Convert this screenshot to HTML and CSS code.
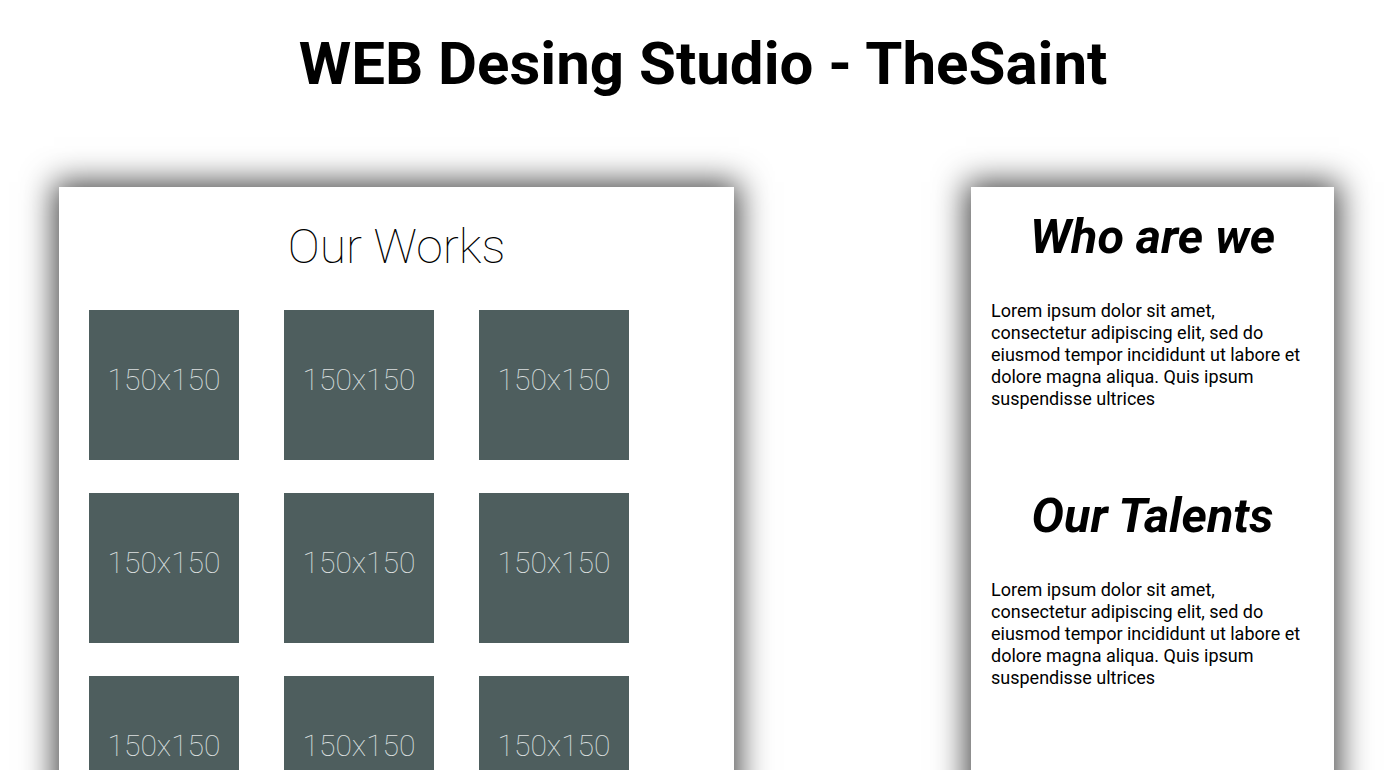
FILE: index.html
```html
<!DOCTYPE html>
<html>
<head>
<meta charset="utf-8">
<link rel="stylesheet" href="styles.css">
</head>
<body>
<h1 class="site-title">WEB Desing Studio - TheSaint</h1>
<main class="layout">
  <section class="card works">
    <h2 class="works-title">Our Works</h2>
    <div class="grid">
      <div class="tile">150x150</div>
      <div class="tile">150x150</div>
      <div class="tile">150x150</div>
      <div class="tile">150x150</div>
      <div class="tile">150x150</div>
      <div class="tile">150x150</div>
      <div class="tile">150x150</div>
      <div class="tile">150x150</div>
      <div class="tile">150x150</div>
    </div>
  </section>
  <aside class="card about">
    <h2 class="about-title">Who are we</h2>
    <p class="about-text">Lorem ipsum dolor sit amet, consectetur adipiscing elit, sed do eiusmod tempor incididunt ut labore et dolore magna aliqua. Quis ipsum suspendisse ultrices</p>
    <h2 class="about-title">Our Talents</h2>
    <p class="about-text">Lorem ipsum dolor sit amet, consectetur adipiscing elit, sed do eiusmod tempor incididunt ut labore et dolore magna aliqua. Quis ipsum suspendisse ultrices</p>
  </aside>
</main>
</body>
</html>
```

FILE: styles.css
```css
html, body {
  margin: 0;
  padding: 0;
  background: #ffffff;
  font-family: Roboto, "Liberation Sans", sans-serif;
  color: #000;
  overflow: hidden;
}

.site-title {
  margin: 0;
  padding-top: 24px;
  padding-left: 6px;
  height: 163px;
  box-sizing: border-box;
  text-align: center;
  font-size: 60px;
  font-weight: 700;
  line-height: 80px;
}

.layout {
  display: flex;
  justify-content: space-between;
  align-items: flex-start;
  padding: 24px 66px 0 59px;
}

.card {
  background: #fff;
  box-shadow: 0 0 30px 5px rgba(0, 0, 0, 0.72);
  min-height: 700px;
}

.works {
  width: 675px;
  padding: 0 30px;
  box-sizing: border-box;
}

.works-title {
  margin: 0;
  padding-top: 30px;
  height: 123px;
  box-sizing: border-box;
  text-align: center;
  font-size: 48px;
  font-weight: 100;
  line-height: 60px;
}

.grid {
  display: grid;
  grid-template-columns: repeat(3, 150px);
  column-gap: 45px;
  row-gap: 33px;
}

.tile {
  width: 150px;
  height: 150px;
  background: #4e5e5e;
  color: #dde0e0;
  font-size: 30px;
  font-weight: 100;
  display: flex;
  align-items: center;
  justify-content: center;
  padding-bottom: 12px;
  box-sizing: border-box;
}

.about {
  width: 363px;
  padding: 0 20px;
  box-sizing: border-box;
}

.about-title {
  margin: 0;
  padding-top: 22px;
  text-align: center;
  font-size: 48.5px;
  font-style: italic;
  font-weight: 700;
  line-height: 56px;
}

.about-text {
  margin: 35px 0 56px;
  font-size: 18px;
  line-height: 22px;
}
```
